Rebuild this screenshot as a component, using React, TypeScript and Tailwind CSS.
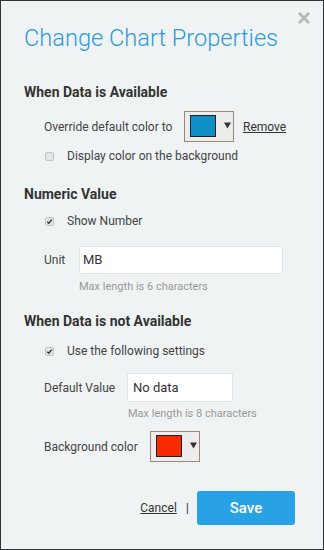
import React from "react";

function Check({ checked }: { checked?: boolean }) {
  return (
    <span className="w-[9px] h-[9px] rounded-[2px] border border-[#bfc3c5] bg-[#e3e5e6] flex items-center justify-center shrink-0">
      {checked && (
        <svg width="7" height="7" viewBox="0 0 7 7">
          <path d="M1.3 3.8 L2.8 5.3 L5.8 1.6" stroke="#333" strokeWidth="1.4" fill="none" />
        </svg>
      )}
    </span>
  );
}

function Picker({ color }: { color: string }) {
  return (
    <div className="w-[50px] h-[31px] border border-[#9b8874] bg-[#ededed] flex items-start shrink-0">
      <div className="mt-[3px] ml-[5px] w-[26px] h-[22px] border border-[#222]" style={{ background: color }} />
      <svg className="mt-[10px] ml-[8px]" width="7" height="7" viewBox="0 0 7 7">
        <path d="M0 0.5 H7 L3.5 6.5 Z" fill="#333" />
      </svg>
    </div>
  );
}

export default function App() {
  return (
    <div className="w-[324px] h-[550px] box-border border border-[#2f353a] bg-[#f0f3f4] relative font-['Roboto',sans-serif] text-[#444]">
      <svg className="absolute left-[296px] top-[10px]" width="14" height="14" viewBox="0 0 14 14">
        <path d="M2 2 L12 12 M12 2 L2 12" stroke="#b3b7b9" strokeWidth="2.6" />
      </svg>
      <div className="pl-[23px] pt-[23px]">
        <div className="h-[28px] leading-[28px] text-[23.6px] font-light text-[#2f9ad6] whitespace-nowrap">
          Change Chart Properties
        </div>

        <div className="mt-[30px] h-[20px] leading-[20px] text-[14px] font-bold text-[#333]">When Data is Available</div>

        <div className="mt-[9px] h-[31px] flex items-center pl-[20px]">
          <span className="text-[12px] w-[140px]">Override default color to</span>
          <Picker color="#0f8fc7" />
          <span className="ml-[9px] text-[12px] underline text-[#333]">Remove</span>
        </div>

        <div className="mt-[5px] h-[18px] flex items-center pl-[21px]">
          <Check />
          <span className="ml-[13px] text-[12px]">Display color on the background</span>
        </div>

        <div className="mt-[19px] h-[20px] leading-[20px] text-[14px] font-bold text-[#333]">Numeric Value</div>

        <div className="mt-[8px] h-[18px] flex items-center pl-[21px]">
          <Check checked />
          <span className="ml-[13px] text-[12px]">Show Number</span>
        </div>

        <div className="mt-[16px] h-[28px] flex items-center pl-[20px]">
          <span className="text-[12px] w-[35px]">Unit</span>
          <div className="w-[204px] h-[28px] bg-white border border-[#e3e6e8] flex items-center pl-[3px] text-[13px] text-[#333]">MB</div>
        </div>
        <div className="mt-[6px] h-[14px] leading-[14px] pl-[55px] text-[11px] text-[#999]">Max length is 6 characters</div>

        <div className="mt-[17px] h-[20px] leading-[20px] text-[14px] font-bold text-[#333]">When Data is not Available</div>

        <div className="mt-[11px] h-[18px] flex items-center pl-[21px]">
          <Check checked />
          <span className="ml-[13px] text-[12px]">Use the following settings</span>
        </div>

        <div className="mt-[13px] h-[29px] flex items-center pl-[20px]">
          <span className="text-[12px] w-[83px]">Default Value</span>
          <div className="w-[106px] h-[29px] bg-white border border-[#e3e6e8] flex items-center pl-[5px] text-[13px] text-[#333]">No data</div>
        </div>
        <div className="mt-[5px] h-[14px] leading-[14px] pl-[104px] text-[11px] text-[#999]">Max length is 8 characters</div>

        <div className="mt-[10px] h-[31px] flex items-center pl-[20px]">
          <span className="text-[12px] w-[106px]">Background color</span>
          <Picker color="#f72a00" />
        </div>
      </div>

      <div className="mt-[29px] flex items-center justify-end pr-[28px]">
        <span className="text-[12px] underline text-[#333]">Cancel</span>
        <span className="ml-[9px] mr-[8px] text-[13px] text-[#333]">|</span>
        <button className="w-[98px] h-[34px] rounded-[3px] bg-[#29a2e5] text-white text-[15px] font-medium">Save</button>
      </div>
    </div>
  );
}
